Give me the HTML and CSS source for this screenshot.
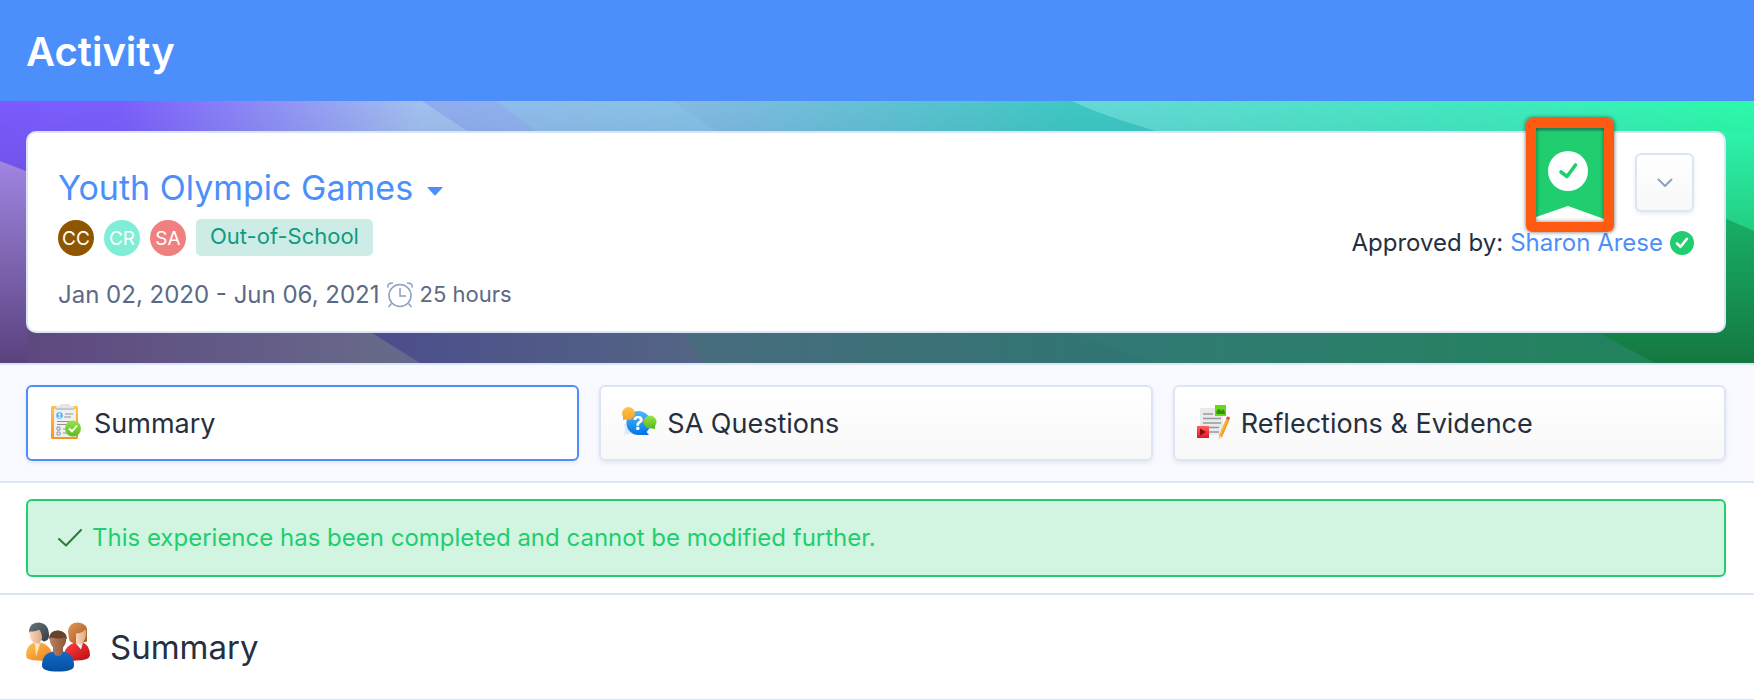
FILE: index.html
```html
<!DOCTYPE html>
<html lang="en">
<head>
<meta charset="utf-8">
<title>Activity</title>
<link rel="stylesheet" href="styles.css">
</head>
<body>
<header class="topbar"><h1 class="topbar-title">Activity</h1></header>

<section class="hero">
  <svg class="hero-art" viewBox="0 0 1754 262" preserveAspectRatio="none" aria-hidden="true">
    <defs>
      <linearGradient id="base" gradientUnits="userSpaceOnUse" x1="0" y1="0" x2="1754" y2="0">
        <stop offset="0" stop-color="#7b5bff"/><stop offset=".07" stop-color="#7b5ffc"/><stop offset=".24" stop-color="#a2c0f0"/><stop offset=".5" stop-color="#7cc6da"/><stop offset=".62" stop-color="#38c4be"/><stop offset="1" stop-color="#2cfcaa"/>
      </linearGradient>
      <linearGradient id="mid" gradientUnits="userSpaceOnUse" x1="420" y1="0" x2="1180" y2="0">
        <stop offset="0" stop-color="#90acee"/><stop offset=".11" stop-color="#90b0ee"/><stop offset=".3" stop-color="#8cb8e8"/><stop offset=".86" stop-color="#3ec8c4"/><stop offset="1" stop-color="#3ec8c4"/>
      </linearGradient>
      <linearGradient id="aqua" gradientUnits="userSpaceOnUse" x1="500" y1="0" x2="1100" y2="0">
        <stop offset="0" stop-color="#8fbfec"/><stop offset=".5" stop-color="#82c6e4"/><stop offset="1" stop-color="#3ac4c0"/>
      </linearGradient>
      <linearGradient id="mint" gradientUnits="userSpaceOnUse" x1="1073" y1="0" x2="1754" y2="0">
        <stop offset="0" stop-color="#66d8d8"/><stop offset=".6" stop-color="#42e8c0"/><stop offset="1" stop-color="#2cfaaa"/>
      </linearGradient>
      <linearGradient id="left" x1="0" y1="0" x2="0" y2="1">
        <stop offset="0" stop-color="#a085e2"/><stop offset="1" stop-color="#5a427e"/>
      </linearGradient>
      <linearGradient id="floor" gradientUnits="userSpaceOnUse" x1="0" y1="0" x2="1754" y2="0">
        <stop offset="0" stop-color="#5d457f"/><stop offset=".22" stop-color="#67698a"/><stop offset=".4" stop-color="#486c7e"/><stop offset=".65" stop-color="#2f7672"/><stop offset="1" stop-color="#17854a"/>
      </linearGradient>
      <linearGradient id="slate" gradientUnits="userSpaceOnUse" x1="372" y1="0" x2="690" y2="0">
        <stop offset="0" stop-color="#4c4d8c"/><stop offset="1" stop-color="#536484"/>
      </linearGradient>
      <linearGradient id="edge" x1="0" y1="0" x2="0" y2="1">
        <stop offset="0" stop-color="#2ef2ac"/><stop offset=".45" stop-color="#22cc80"/><stop offset="1" stop-color="#188a50"/>
      </linearGradient>
      <linearGradient id="edge2" x1="0" y1="0" x2="0" y2="1">
        <stop offset="0" stop-color="#18b46a"/><stop offset="1" stop-color="#147840"/>
      </linearGradient>
      <linearGradient id="shade" x1="0" y1="0" x2="0" y2="1">
        <stop offset="0" stop-color="#000" stop-opacity="0"/><stop offset="1" stop-color="#000" stop-opacity=".14"/>
      </linearGradient>
    </defs>
    <path fill="url(#base)" d="M0 0H1754V262H0z"/>
    <path fill="url(#mid)" d="M422 0H1200V40H482z"/>
    <path fill="url(#aqua)" d="M496 0H672L730 40H550z" opacity=".8"/>
    <path fill="url(#mint)" d="M1072 0H1754V130H1380C1270 50 1130 30 1072 0z"/>
    <path fill="url(#shade)" d="M0 0H1754V110H0z"/>
    <path fill="url(#left)" d="M0 60L150 118V262H0z"/>
    <path fill="url(#floor)" d="M28 222H1754V262H28z"/>
    <path fill="url(#slate)" d="M356 222H676L703 262H420z"/>
    <path fill="#38867c" opacity=".25" d="M1045 222H1600L1660 262H1155z"/>
    <path fill="url(#edge)" d="M1720 30H1754V262H1660L1598 228H1720z"/>
    <path fill="url(#edge2)" d="M1690 102L1754 130V262H1655L1580 222H1690z"/>
  </svg>

  <article class="card">
    <div class="card-main">
      <button class="title-button" type="button">Youth Olympic Games
        <svg class="caret" viewBox="0 0 16 9" aria-hidden="true"><path fill="currentColor" d="M1 0h14q1 0 .4.8L8.8 8q-.8.8-1.6 0L.6.8Q0 0 1 0z"/></svg>
      </button>
      <div class="tags">
        <span class="avatar avatar-brown">CC</span>
        <span class="avatar avatar-mint">CR</span>
        <span class="avatar avatar-coral">SA</span>
        <span class="tag">Out-of-School</span>
      </div>
      <div class="dates">
        <span>Jan 02, 2020 - Jun 06, 2021</span>
        <svg class="clock" viewBox="0 0 26 26" fill="none" stroke="#8ba0c2" stroke-width="1.5" aria-hidden="true"><circle cx="13" cy="13.500" r="11"/><path d="M13 6v8h6M4.500 21.500l-3 3.500M21.500 21.500l3 3.500M1 5.500Q0 1 6 1M25 5.500q1-4.500-5-4.500"/></svg>
        <span class="hours">25 hours</span>
      </div>
    </div>
    <div class="card-side">
      <button class="more" type="button" aria-label="More actions">
        <svg class="chevron" viewBox="0 0 16 10" fill="none" stroke="#8ba0c2" stroke-width="2" stroke-linecap="round" stroke-linejoin="round" aria-hidden="true"><path d="M1.500 1.500L8 8l6.500-6.500"/></svg>
      </button>
      <p class="approved">Approved by: <a class="approver" href="#">Sharon Arese</a>
        <svg class="verified" viewBox="0 0 24 24" aria-hidden="true"><circle cx="12" cy="12" r="12" fill="#20ce6f"/><path d="M7 12.500l3.500 3.300 6.500-8" fill="none" stroke="#fff" stroke-width="2.600" stroke-linecap="round" stroke-linejoin="round"/></svg>
      </p>
    </div>
    <div class="ribbon">
      <svg class="ribbon-art" viewBox="0 0 68 94" preserveAspectRatio="none" aria-hidden="true">
        <path fill="#fff" d="M0 3h68v91H0z"/><path fill="#20ce6f" d="M0 0H68V91L32 78 0 89z"/><path fill="#22a86c" d="M0 0h68v3H0z"/>
        <circle cx="32" cy="43" r="20" fill="#fff"/><path d="M25 44l6 4.500L39.500 37" fill="none" stroke="#20ce6f" stroke-width="3.600" stroke-linecap="round" stroke-linejoin="round"/>
      </svg>
    </div>
  </article>
</section>

<nav class="tabs">
  <button class="tab tab-active" type="button">
    <svg class="tab-icon" viewBox="0 0 36 36" aria-hidden="true">
      <defs><linearGradient id="board" x1="0" y1="0" x2="0" y2="1"><stop offset="0" stop-color="#ffc34e"/><stop offset="1" stop-color="#f7941e"/></linearGradient><linearGradient id="ok" x1="0" y1="0" x2="0" y2="1"><stop offset="0" stop-color="#9be04a"/><stop offset="1" stop-color="#58bd22"/></linearGradient></defs>
      <rect x="3" y="2" width="27" height="33" rx="1.500" fill="url(#board)"/><path fill="#eef0f2" d="M6 5h22v28H6z"/><path fill="#c5c9cc" d="M8 6V3q0-1 2-1h2l1-2h8l1 2h2q2 0 2 1v3z"/><path fill="#e4e6e8" d="M8 4V3q0-1 2-1h2l1-2h8l1 2h2q2 0 2 1v1z"/>
      <circle cx="11.500" cy="11.500" r="3.200" fill="#48aef0"/><circle cx="11.500" cy="10.500" r="1.200" fill="#fff"/><path fill="#fff" d="M9.500 13.700q2-3 4 0z"/>
      <path stroke="#909599" stroke-width="1.200" d="M17 10h8M16 13h7M9 17.500h17M9 20.500h13M15 25h5M15 29h5"/><path fill="none" stroke="#909599" d="M9 23h3v3H9zM9 28h3v3H9z"/>
      <circle cx="25" cy="24.500" r="8" fill="url(#ok)"/><path d="M21 24.500l3 2.800 5-5.800" fill="none" stroke="#fff" stroke-width="1.900"/>
    </svg>
    <span class="tab-label">Summary</span>
  </button>
  <button class="tab" type="button">
    <svg class="tab-icon" viewBox="0 0 36 36" aria-hidden="true">
      <defs><linearGradient id="ask" x1="0" y1="0" x2="0" y2="1"><stop offset="0" stop-color="#4db9ff"/><stop offset="1" stop-color="#0673e4"/></linearGradient><linearGradient id="amber" x1="0" y1="0" x2="0" y2="1"><stop offset="0" stop-color="#ffc44a"/><stop offset="1" stop-color="#f7a02c"/></linearGradient></defs>
      <path fill="#dbe9fc" d="M3 20l10-4 9 14H7l-4 1 1-5z"/><circle cx="17.500" cy="19" r="12" fill="url(#ask)"/><path fill="#0673e4" d="M24 26l4 5h-9z"/>
      <circle cx="7.500" cy="9.500" r="6.500" fill="url(#amber)"/><path fill="#f7a02c" d="M2 12v4l5-1z"/><circle cx="29" cy="18" r="6.500" fill="url(#ok)"/><path fill="#58bd22" d="M34 20v5l-5-1z"/>
      <text class="question" x="17" y="26" text-anchor="middle">?</text>
    </svg>
    <span class="tab-label">SA Questions</span>
  </button>
  <button class="tab" type="button">
    <svg class="tab-icon" viewBox="0 0 36 36" aria-hidden="true">
      <defs><linearGradient id="play" x1="0" y1="0" x2="0" y2="1"><stop offset="0" stop-color="#ff6161"/><stop offset="1" stop-color="#e01822"/></linearGradient></defs>
      <path fill="#e9eaec" d="M5 4h23v27H5z"/><path stroke="#96999c" stroke-width="1.300" d="M8 10h10M8 14.500h18M8 19h18M8 23.500h16M13 28h11"/>
      <path fill="#68d919" d="M20 1h11v11H20z"/><path fill="#388e0d" d="M21.500 10V7L24 4.500 26 7l2-2 2 3v2z"/><path fill="url(#play)" d="M2 22h12v12H2z"/><path fill="#8c0a10" d="M5 24.500l6 3.500-6 3.500z"/>
      <path fill="#f9b233" d="M31 15l3 1.300L27 33l-3.200-1.300z"/><path fill="#e8942a" d="M33 16l1 .4L27 33l-1-.4z"/><path fill="#f3d1a2" d="M23.800 31.700L27 33l-3.500 3z"/><path fill="#ed4350" d="M31 15l.8-2q1-.8 2.500 0 .8.500.5 1.500L34 16.300z"/>
    </svg>
    <span class="tab-label">Reflections &amp; Evidence</span>
  </button>
</nav>

<div class="notice-wrap">
  <p class="notice" role="status">
    <svg class="notice-icon" viewBox="0 0 24 18" fill="none" stroke="#2e7a38" stroke-width="2" stroke-linecap="round" stroke-linejoin="round" aria-hidden="true"><path d="M1 10l7 6.500L23 1"/></svg>
    This experience has been completed and cannot be modified further.
  </p>
</div>

<section class="summary">
  <svg class="people" viewBox="0 0 64 49" aria-hidden="true">
    <defs>
      <linearGradient id="orange" x1="0" y1="0" x2="1" y2="1"><stop offset="0" stop-color="#ffc252"/><stop offset="1" stop-color="#ee7e1e"/></linearGradient>
      <linearGradient id="red" x1="0" y1="0" x2="1" y2="1"><stop offset="0" stop-color="#f44"/><stop offset="1" stop-color="#b80c10"/></linearGradient>
      <linearGradient id="blue" x1="0" y1="0" x2="0" y2="1"><stop offset="0" stop-color="#1269c4"/><stop offset="1" stop-color="#0450a2"/></linearGradient>
      <linearGradient id="dark" x1="0" y1="0" x2="1" y2="1"><stop offset="0" stop-color="#68737c"/><stop offset="1" stop-color="#343e46"/></linearGradient>
      <linearGradient id="ginger" x1="0" y1="0" x2="1" y2="1"><stop offset="0" stop-color="#e39a58"/><stop offset="1" stop-color="#a8521a"/></linearGradient>
      <linearGradient id="face" x1="0" y1="0" x2="1" y2="0"><stop offset="0" stop-color="#f8d6bd"/><stop offset="1" stop-color="#dfa985"/></linearGradient>
      <linearGradient id="brown" x1="0" y1="0" x2="1" y2="0"><stop offset="0" stop-color="#b98260"/><stop offset="1" stop-color="#8c5839"/></linearGradient>
    </defs>
    <path fill="url(#dark)" d="M3 8Q4 0 13 0q10 1 10 13 0 5-5 6L4 11z"/>
    <path fill="url(#face)" d="M4 9q6 0 9-2 3 3 3 9l-2 4v5l-5 2V21q-4-2-5-7z"/>
    <path fill="url(#orange)" d="M0 33q0-10 8-13l2 5 5-5q9 3 11 11v5q-6 3-14 2-12 0-12-5z"/><path fill="#ffe7b4" d="M9 21l1 13 4-13z"/>
    <path fill="url(#ginger)" d="M42 9q1-9 10-9 10 1 9 10v9l-9 2q-9 0-9-5z"/>
    <path fill="url(#face)" d="M50 11q6 0 9-4 1 0 1 5-1 7-4 8l-1 4-5-2v-5z"/>
    <path fill="url(#red)" d="M38 31q2-8 11-11l6 6 2-6q7 3 7 13-1 5-14 5-6 1-12-2z"/><path fill="#eef0f4" d="M50 21l5 6 1-5z"/>
    <path fill="url(#brown)" d="M24 15q1-6 8-7 8 1 8 7 1 5-3 10v6l-5 5-5-5v-6q-4-5-3-10z"/><path fill="#68432c" d="M23 17q0-9 9-9 9 1 9 9l-2-2q-7 2-14 0z"/>
    <path fill="#fff" d="M27 30l5 5 5-5v6H27z"/><path fill="url(#blue)" d="M16 43q0-12 11-14 5 9 10 0 11 2 11 14 0 6-16 6-16 0-16-6z"/>
  </svg>
  <h2 class="summary-title">Summary</h2>
</section>
</body>
</html>
```

FILE: styles.css
```css
* { box-sizing: border-box; }
body {
  margin: 0;
  background: #fff;
  color: #252f40;
  font-family: Inter, "Liberation Sans", sans-serif;
  font-size: 24px;
}
button { font: inherit; color: inherit; cursor: pointer; }
h1, h2, p { margin: 0; }

.topbar {
  display: flex;
  align-items: center;
  padding: 26px 26px 23px;
  background: #4c8ffb;
}
.topbar-title { color: #fff; font-size: 40px; line-height: 52px; font-weight: 600; }

.hero {
  position: relative;
  padding: 30px 28px 30px 26px;
  border-bottom: 2px solid #dae6f6;
}
.hero-art { position: absolute; inset: 0; width: 100%; height: 100%; }

.card {
  position: relative;
  display: flex;
  justify-content: space-between;
  padding: 20px 30px;
  background: #fff;
  border: 2px solid #dae6f6;
  border-radius: 10px;
}
.card-main { display: flex; flex-direction: column; align-items: flex-start; padding-top: 10px; }
.title-button {
  display: flex;
  align-items: center;
  gap: 14px;
  padding: 0;
  border: 0;
  background: none;
  color: #4c8ffb;
  font-size: 34px;
  line-height: 50px;
}
.caret { width: 16px; height: 9px; margin-top: 6px; }
.tags { display: flex; align-items: center; gap: 10px; margin-top: 6px; }
.avatar {
  width: 36px;
  height: 36px;
  border-radius: 50%;
  color: #fff;
  font-size: 19px;
  line-height: 38px;
  text-align: center;
}
.avatar-brown { background: #8f5600; }
.avatar-mint { background: #80eed6; }
.avatar-coral { background: #f08080; }
.tag {
  padding: 0 14px 3px;
  border-radius: 5px;
  background: #cdece6;
  color: #109a80;
  font-size: 22px;
  line-height: 34px;
}
.dates { display: flex; align-items: center; gap: 7px; margin-top: 22px; color: #5a6a85; line-height: 33px; }
.clock { width: 26px; height: 26px; }
.hours { font-size: 22px; }

.card-side { display: flex; flex-direction: column; align-items: flex-end; gap: 14px; }
.more {
  display: grid;
  place-items: center;
  width: 59px;
  height: 59px;
  padding: 0;
  border: 2px solid #dae6f6;
  border-radius: 6px;
  background: linear-gradient(#fff, #f8f8f8);
  box-shadow: 0 2px 4px rgba(0, 0, 0, .08);
}
.chevron { width: 16px; height: 10px; }
.approved { display: flex; align-items: center; gap: 7px; line-height: 34px; }
.approver { color: #4c8ffb; text-decoration: none; }
.verified { width: 24px; height: 24px; }

/* Highlighted approval ribbon hanging over the card's top edge */
.ribbon {
  position: absolute;
  top: -15px;
  right: 110px;
  width: 88px;
  height: 114px;
  border: 10px solid #ff5a12;
  border-radius: 6px;
  box-shadow: 0 0 4px rgba(0, 0, 0, .6);
}
.ribbon::after {
  content: "";
  position: absolute;
  inset: 0;
  box-shadow: inset 0 0 4px rgba(0, 0, 0, .5);
}
.ribbon-art { display: block; width: 100%; height: 100%; }

.tabs {
  display: grid;
  grid-template-columns: repeat(3, 1fr);
  gap: 20px;
  padding: 20px 28px 20px 26px;
  background: #f9faff;
  border-bottom: 2px solid #dae6f6;
}
.tab {
  display: flex;
  align-items: center;
  gap: 10px;
  padding: 16px 20px 18px;
  border: 2px solid #dae6f6;
  border-radius: 6px;
  background: linear-gradient(#fff, #f8f8f8);
  box-shadow: 0 2px 4px rgba(0, 0, 0, .08);
  font-size: 27px;
  line-height: 34px;
  text-align: left;
}
.tab-active { border-color: #4c8ffb; background: #fff; }
.tab-label { padding-top: 4px; }
.tab-icon { width: 36px; height: 36px; }
.question { fill: #fff; font-size: 19px; font-weight: 700; }

.notice-wrap { padding: 16px 28px 16px 26px; border-bottom: 2px solid #dae6f6; }
.notice {
  display: flex;
  align-items: center;
  gap: 10px;
  padding: 20px 30px;
  border: 2px solid #20ce6f;
  border-radius: 6px;
  background: #d2f5e2;
  color: #20ce6f;
  line-height: 34px;
}
.notice-icon { width: 24px; height: 18px; }

.summary {
  display: flex;
  align-items: center;
  gap: 20px;
  padding: 27px 26px;
  border-bottom: 1px solid #dae6f6;
}
.people { width: 64px; height: 50px; }
.summary-title { font-size: 33px; line-height: 50px; font-weight: 400; }
```
